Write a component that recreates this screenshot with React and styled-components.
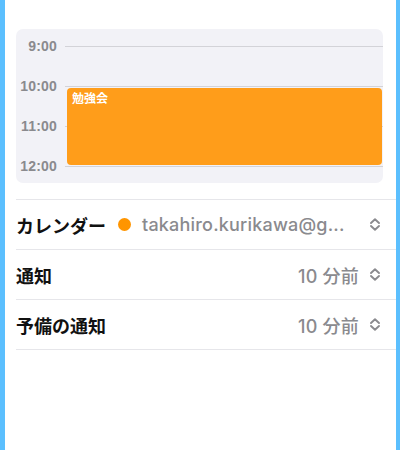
import React from "react";
import styled, { createGlobalStyle } from "styled-components";

const GlobalStyle = createGlobalStyle`
  html, body {
    margin: 0;
    padding: 0;
    height: 100%;
  }
  body {
    font-family: Inter, "Noto Sans CJK JP", sans-serif;
    -webkit-font-smoothing: antialiased;
  }
  #root {
    height: 100%;
  }
`;

const hours = ["9:00", "10:00", "11:00", "12:00"];

const rows = [
  { label: "カレンダー", value: "takahiro.kurikawa@g...", dot: true },
  { label: "通知", value: "10 分前" },
  { label: "予備の通知", value: "10 分前" },
];

function UpDown() {
  return (
    <Chevron viewBox="0 0 12 13" width="12" height="13">
      <path d="M2 5 L6 1.3 L10 5" />
      <path d="M2 8 L6 11.7 L10 8" />
    </Chevron>
  );
}

function App() {
  return (
    <>
      <GlobalStyle />
      <Frame>
        <Sheet>
          <DayCard>
            {hours.map((h) => (
              <HourRow key={h}>
                <HourLabel>{h}</HourLabel>
                <HourLine />
              </HourRow>
            ))}
            <Event>勉強会</Event>
          </DayCard>
          <List>
            {rows.map((r) => (
              <Row key={r.label}>
                <Label $fill={!r.dot}>{r.label}</Label>
                {r.dot && <Dot />}
                <Value $fill={r.dot}>{r.value}</Value>
                <UpDown />
              </Row>
            ))}
          </List>
        </Sheet>
      </Frame>
    </>
  );
}

const Frame = styled.div`
  height: 100%;
  background-color: #5bbffe;
  padding: 0 4px 0 5px;
  box-sizing: border-box;
`;

const Sheet = styled.div`
  height: 100%;
  background-color: #ffffff;
  padding: 29px 0 0 11px;
  box-sizing: border-box;
`;

const DayCard = styled.div`
  position: relative;
  margin-right: 13px;
  height: 154px;
  box-sizing: border-box;
  padding: 7px 0;
  background-color: #f2f2f7;
  border-radius: 7px;
  display: flex;
  flex-direction: column;
  gap: 20px;
`;

const HourRow = styled.div`
  height: 20px;
  display: flex;
  align-items: center;
  gap: 8px;
`;

const HourLabel = styled.span`
  width: 41px;
  text-align: right;
  font-family: "Liberation Sans", "Noto Sans", sans-serif;
  font-size: 14px;
  font-weight: 700;
  letter-spacing: 0.2px;
  color: #8a8a8e;
  line-height: 20px;
`;

const HourLine = styled.div`
  flex: 1;
  height: 1px;
  background-color: #d3d3d8;
`;

const Event = styled.div`
  position: absolute;
  left: 51px;
  right: 1px;
  top: 59px;
  height: 77px;
  box-sizing: border-box;
  padding: 3px 5px;
  background-color: #ff9d1a;
  border-radius: 4px;
  color: #ffffff;
  font-size: 12px;
  font-weight: 700;
  line-height: 15px;
`;

const List = styled.div`
  margin-top: 16px;
  border-top: 1px solid #e6e6ea;
`;

const Row = styled.div`
  height: 49px;
  border-bottom: 1px solid #e6e6ea;
  display: flex;
  align-items: center;
  padding-right: 15px;
  gap: 8px;
`;

const Label = styled.span`
  flex: ${(p) => (p.$fill ? "1" : "none")};
  font-size: 18px;
  font-weight: 700;
  color: #111111;
  white-space: nowrap;
`;

const Dot = styled.span`
  width: 13px;
  height: 13px;
  border-radius: 50%;
  background-color: #ff9500;
  margin: 0 3px 0 4px;
  flex: none;
`;

const Value = styled.span`
  flex: ${(p) => (p.$fill ? "1" : "none")};
  min-width: 0;
  font-size: 18px;
  font-weight: 500;
  color: #8a8a8e;
  letter-spacing: 0.2px;
  white-space: nowrap;
`;

const Chevron = styled.svg`
  flex: none;
  margin-left: 2px;
  fill: none;
  stroke: #8a8a8e;
  stroke-width: 1.9;
  stroke-linecap: round;
  stroke-linejoin: round;
`;

export default App;
